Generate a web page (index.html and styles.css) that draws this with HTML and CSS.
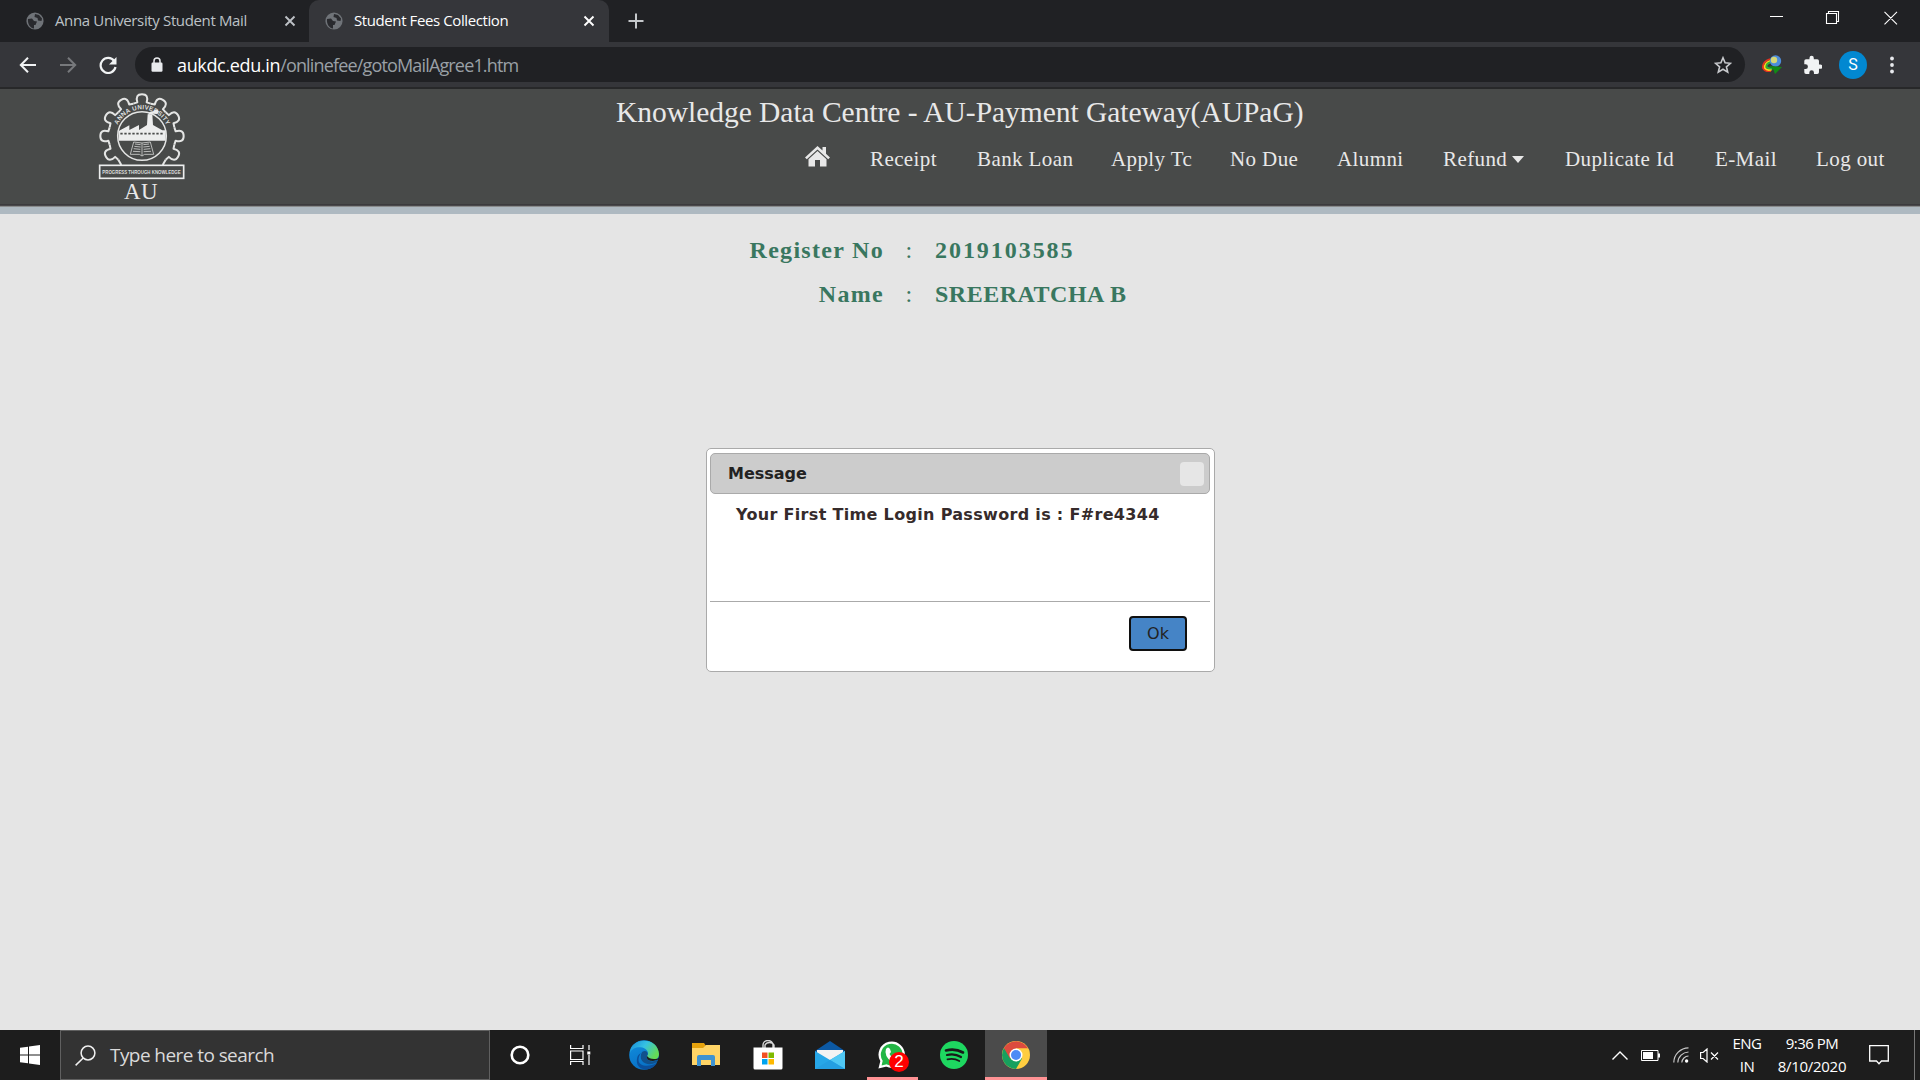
FILE: index.html
```html
<!DOCTYPE html>
<html lang="en">
<head>
<meta charset="utf-8">
<title>Student Fees Collection</title>
<link rel="stylesheet" href="styles.css">
</head>
<body>
<svg class="defs" width="0" height="0">
  <symbol id="globe" viewBox="0 0 18 18"><circle cx="9" cy="9" r="8.6" fill="#6f7378"/><path d="M2 7 6 6.500 8 9 11 9.500 9.500 13 8 13 8 16.500C4 16 1.500 12 2 7ZM9 2 13 3 16 6.500 15.500 9 12 8.500 11.500 6 8.500 5Z" fill="#292a2e"/></symbol>
  <symbol id="cross" viewBox="0 0 12 12"><path d="M1.500 1.500 10.500 10.500M10.500 1.500 1.500 10.500" stroke="currentColor" stroke-width="1.900"/></symbol>
</svg>

<div class="tabs">
  <div class="tab"><svg class="fav"><use href="#globe"/></svg><span class="tab-title t1">Anna University Student Mail</span><svg class="x"><use href="#cross"/></svg></div>
  <div class="tab active"><svg class="fav"><use href="#globe"/></svg><span class="tab-title t2">Student Fees Collection</span><svg class="x"><use href="#cross"/></svg></div>
  <svg class="plus" width="16" height="16" viewBox="0 0 16 16"><path d="M8 .5v15M.5 8h15" stroke="#c5c8cb" stroke-width="2"/></svg>
  <svg class="winctl" width="128" height="14" viewBox="0 0 128 14" fill="none" stroke="#fff" stroke-width="1.100"><path d="M0 5.500h13M56.500 2.500h10v10h-10zM58.500 2.500v-2h10v10h-2M114.500.8 127 13.300M127 .8 114.500 13.300"/></svg>
</div>

<div class="toolbar">
  <div class="navbtns">
    <svg width="18" height="16" viewBox="0 0 18 16" fill="none" stroke="#f1f3f4" stroke-width="2"><path d="M17 8H2M9 .8 1.800 8 9 15.200"/></svg>
    <svg width="18" height="16" viewBox="0 0 18 16" fill="none" stroke="#77797c" stroke-width="2"><path d="M1 8h15M9 .8 16.200 8 9 15.200"/></svg>
    <svg width="18" height="18" viewBox="0 0 18 18"><path d="M15.200 5A7.500 7.500 0 1 0 16.500 11" fill="none" stroke="#f1f3f4" stroke-width="2.200"/><path d="M17.500 1v7.500H10z" fill="#f1f3f4"/></svg>
  </div>
  <div class="omnibox">
    <svg width="12" height="15" viewBox="0 0 12 15"><rect x=".5" y="5.500" width="11" height="9.200" rx="1.200" fill="#e8eaed"/><path d="M3 6V4a3 3 0 0 1 6 0v2" fill="none" stroke="#e8eaed" stroke-width="1.500"/></svg>
    <span class="url"><b>aukdc.edu.in</b>/onlinefee/gotoMailAgree1.htm</span>
    <svg class="star" width="18" height="18" viewBox="0 0 18 18"><path d="m9 1.800 2.100 5 5.400.5-4.100 3.500 1.300 5.300L9 13.300l-4.700 2.800 1.300-5.300L1.500 7.300l5.400-.5z" fill="none" stroke="#c8cacd" stroke-width="1.600"/></svg>
  </div>
  <div class="exts">
    <svg width="22" height="20" viewBox="0 0 22 20"><g fill="none" stroke-width="1.800"><path d="M9 4Q1 7 2 13q2 4 8 3" stroke="#e43120"/><path d="M10 5.500Q3 8 3.800 13q2 3 7 1.500" stroke="#ffd817"/><path d="M11 7Q5 8 5.500 12q2 2 6 1.500" stroke="#2ab23b"/></g><circle cx="14.500" cy="6" r="5.700" fill="#4c8ddc"/><circle cx="13" cy="5" r="3.200" fill="#d5d777"/><path d="M8 11 21 12 14 19 12.500 15Z" fill="#128a16"/></svg>
    <svg class="puzzle" width="19" height="19" viewBox="1 0 21 22"><path d="M20.500 11H19V7a2 2 0 0 0-2-2h-4V3.500a2.500 2.500 0 0 0-5 0V5H4a2 2 0 0 0-2 2v3.800h1.500a2.700 2.700 0 0 1 0 5.400H2V20a2 2 0 0 0 2 2h3.800v-1.500a2.700 2.700 0 0 1 5.400 0V22H17a2 2 0 0 0 2-2v-4h1.500a2.500 2.500 0 0 0 0-5z" fill="#f1f3f4"/></svg>
    <span class="avatar">S</span>
    <svg width="4" height="18" viewBox="0 0 4 18" fill="#e8eaed"><circle cx="2" cy="2.500" r="1.900"/><circle cx="2" cy="9" r="1.900"/><circle cx="2" cy="15.500" r="1.900"/></svg>
  </div>
</div>

<header class="site">
  <div class="brand">
    <svg class="crest" width="86" height="86" viewBox="57 28 258 258">
      <defs><path id="tooth" d="M-26-97L-14-101Q-21-125 0-125Q21-125 14-101L26-97"/><path id="arc" d="M106 157a80 80 0 0 1 160 0"/></defs>
      <g transform="translate(186 157)" fill="none" stroke="#e4e5e4" stroke-width="6" stroke-linejoin="round">
        <use href="#tooth" transform="rotate(-120)"/><use href="#tooth" transform="rotate(-90)"/><use href="#tooth" transform="rotate(-60)"/><use href="#tooth" transform="rotate(-30)"/><use href="#tooth"/><use href="#tooth" transform="rotate(30)"/><use href="#tooth" transform="rotate(60)"/><use href="#tooth" transform="rotate(90)"/><use href="#tooth" transform="rotate(120)"/>
        <path d="M-71 71-62 87M71 71 62 87"/><circle r="73" stroke-width="4.500"/>
      </g>
      <text class="arc-text"><textPath href="#arc" startOffset="34">ANNA UNIVERSITY</textPath></text>
      <path d="M116 171V142L148 125V139L177 124V139L201 124 203 92H217L219 124 247 140H257V171Z" fill="#eceded"/>
      <path d="M205 94Q206 82 220 83 230 72 237 84L232 91 219 90Z" fill="#eceded"/>
      <path d="M121 150H253" stroke="#4a4c4b" stroke-width="5" stroke-dasharray="7 5"/>
      <path d="M186 178 161 175 151 212 178 212 186 217 194 212 221 212 211 175ZM186 178V216M182 183 165 181M182 190 163 188M181 197 161 195M181 204 159 203M190 183 207 181M190 190 209 188M191 197 211 195M191 204 213 203" fill="none" stroke="#d0d1d0" stroke-width="2.500"/>
      <rect x="59" y="245" width="252" height="39" fill="#484a49" stroke="#eceded" stroke-width="5"/>
      <text class="motto" x="67" y="272" textLength="235" lengthAdjust="spacingAndGlyphs">PROGRESS THROUGH KNOWLEDGE</text>
    </svg>
    <span class="au">AU</span>
  </div>
  <div class="site-main">
    <h1>Knowledge Data Centre - AU-Payment Gateway(AUPaG)</h1>
    <nav>
      <svg class="home" width="25" height="21" viewBox="0 0 25 21" fill="#e8e8e8"><path d="M12.500 0 0 11.500 1.800 13.300 12.500 3.500 23.200 13.300 25 11.500 21 7.800V1H17.500V4.500Z"/><path d="M12.500 5 3.500 13.300V20.500H10V14H15V20.500H21.500V13.300Z"/></svg>
      <a class="w67">Receipt</a><a class="w94">Bank Loan</a><a class="w79">Apply Tc</a><a class="w67">No Due</a><a class="w66">Alumni</a><a class="refund">Refund<i class="caret"></i></a><a class="w110">Duplicate Id</a><a class="w61">E-Mail</a><a class="w67">Log out</a>
    </nav>
  </div>
</header>

<main>
  <div class="student">
    <span class="label">Register No</span><span class="colon">:</span><span class="digits">2019103585</span>
    <span class="label">Name</span><span class="colon">:</span><span class="name">SREERATCHA B</span>
  </div>
  <section class="dialog">
    <div class="dialog-title"><span>Message</span><button class="close" aria-label="Close"></button></div>
    <p>Your First Time Login Password is : F#re4344</p>
    <div class="dialog-foot"><button class="ok">Ok</button></div>
  </section>
</main>

<footer class="taskbar">
  <div class="start"><svg width="20" height="20" viewBox="0 0 20 20" fill="#fff"><path d="M0 2.800 8 1.700V9.500H0ZM9 1.500 20 0V9.500H9ZM0 10.500H8V18.300L0 17.200ZM9 10.500H20V20L9 18.500Z"/></svg></div>
  <div class="search"><svg width="21" height="21" viewBox="0 0 21 21" fill="none" stroke="#f0f0f0" stroke-width="1.500"><circle cx="13" cy="8" r="6.900"/><path d="M8.200 13 .6 20.400"/></svg><span>Type here to search</span></div>
  <div class="cell c60"><svg width="20" height="20" viewBox="0 0 20 20"><circle cx="10" cy="10" r="8.300" fill="none" stroke="#fff" stroke-width="2.600"/></svg></div>
  <div class="cell c63"><svg width="21" height="20" viewBox="0 0 21 20" fill="none" stroke="#fff" stroke-width="1.200"><path d="M.6 0V3.500H13V0M.6 6H13V14.500H.6ZM.6 20V16.500H13V20M19 0V5M19 10V20"/><path d="M17.300 6.500h3v3h-3z" fill="#fff" stroke="none"/></svg></div>
  <div class="cell"><svg width="30" height="30" viewBox="0 0 30 30"><defs><linearGradient id="ea" x2="1" y2=".5"><stop stop-color="#1789d8"/><stop offset=".5" stop-color="#35c1e4"/><stop offset="1" stop-color="#65db55"/></linearGradient><linearGradient id="eb" y2="1" x2=".4"><stop stop-color="#1290df"/><stop offset="1" stop-color="#0870c5"/></linearGradient></defs><circle cx="15" cy="15" r="14.800" fill="url(#eb)"/><path d="M1 13C1-3 29-4 30 14c0 8-12 8-12 3 0-2 1-2 1-4C18 6 4 5 1 13Z" fill="url(#ea)"/><path d="M12 13C4 25 17 29 28 23 22 33 6 31 8 19c0-3 2-5 4-6Z" fill="#0b4f9b"/><path d="M13 12c-4 8 2 13 10 12 5-1 7-4 5-4-5 3-11 1-10-4 2-2 0-7-5-4Z" fill="#11518d"/><path d="M18 16q-1 5 6 5l5.500-1.500-1.500 3 4-1v-5q-3 3-7 2.500-5 0-7-3Z" fill="#1d1d1d"/></svg></div>
  <div class="cell"><svg width="28" height="24" viewBox="0 0 28 24"><path d="M0 0H12L14 3H28V22H0Z" fill="#e6a20c"/><path d="M0 5H11L14 2H28V22H0Z" fill="#ffd466"/><path d="M5 23V14Q5 12 7 12H21Q23 12 23 14V23H19V17H9V23Z" fill="#3f93d1"/></svg></div>
  <div class="cell"><svg width="30" height="30" viewBox="0 0 30 30"><path d="M10 8V5a5 4.500 0 0 1 10 0V8M12 8V5a5 4.500 0 0 1 9 0V8" fill="none" stroke="#d8d8d8" stroke-width="1.400"/><path d="M.5 7.500h29V28q0 1.500-1.500 1.500H2Q.5 29.500.5 28Z" fill="#fff"/><path d="M9 12.500h5.500V18H9z" fill="#f25022"/><path d="M15.500 12.500H21V18h-5.500z" fill="#7fba00"/><path d="M9 19h5.500v5.500H9z" fill="#00a4ef"/><path d="M15.500 19H21v5.500h-5.500z" fill="#ffb900"/></svg></div>
  <div class="cell"><svg width="30" height="28" viewBox="0 0 30 28"><path d="M0 10 15 0 30 10V18H0Z" fill="#0c59a4"/><path d="M2 9H28V21H2Z" fill="#f3f3f3"/><path d="M0 10 15 19 30 10V28H0Z" fill="#27a7e8"/><path d="M15 19 30 10V28Z" fill="#50c8f4"/><path d="M15 19 30 28H0Z" fill="#249fe2"/></svg></div>
  <div class="cell whats"><svg width="28" height="28" viewBox="0 0 28 28"><path d="M2 26 3.500 20A12 12 0 1 1 8.500 24.500Z" fill="#23b645" stroke="#fff" stroke-width="2.300"/><path d="M8 8q2-3 4 0l1 3-1.500 2q2 4 5 5l2-2 3 2q0 4-4 4Q8 19 7.500 11Z" fill="#fff"/></svg><span class="badge">2</span></div>
  <div class="cell"><svg width="28" height="28" viewBox="0 0 28 28"><circle cx="14" cy="14" r="14" fill="#1ed760"/><g fill="none" stroke="#191919" stroke-linecap="round"><path d="M6 9.500q9-2.500 17 2" stroke-width="2.600"/><path d="M7 14q7.500-2 14 2" stroke-width="2.200"/><path d="M7.500 18.300q6.500-1.500 11.800 1.700" stroke-width="1.800"/></g></svg></div>
  <div class="cell chrome"><svg width="28" height="28" viewBox="0 0 28 28"><circle cx="14" cy="14" r="14" fill="#ffcd40"/><path d="M14 14 1.900 7A14 14 0 0 0 14 28L20 17.500Z" fill="#17a05e"/><path d="M14 14 8 17.500 1.900 7A14 14 0 0 1 26.100 7.300H14Z" fill="#dc4b3e"/><circle cx="14" cy="14" r="6.500" fill="#fff"/><circle cx="14" cy="14" r="5" fill="#4c8bf5"/></svg></div>
  <div class="tray">
    <svg class="chev" width="16" height="9" viewBox="0 0 16 9" fill="none" stroke="#fff" stroke-width="1.400"><path d="M.5 8.500 8 1 15.500 8.500"/></svg>
    <svg class="batt" width="19" height="11" viewBox="0 0 19 11"><path d="M.5.5h16.500v10H.5z" fill="none" stroke="#fff"/><path d="M2 2h10v7H2zM17 3.500h2v4h-2z" fill="#fff"/></svg>
    <svg class="wifi" width="16" height="16" viewBox="0 0 16 16" fill="none" stroke="#c9c9c9" stroke-width="1.200"><path d="M.8 15.500A15 15 0 0 1 15.500.8M4.800 15.500A11 11 0 0 1 15.500 5M8.800 15.500A7 7 0 0 1 15.500 9"/><circle cx="13.600" cy="14" r="1.700" fill="#fff" stroke="none"/></svg>
    <svg class="vol" width="19" height="15" viewBox="0 0 19 15" fill="none" stroke="#fff" stroke-width="1.200"><path d="M.6 4.500h2.500L7 1V14L3.100 10.500H.6ZM11 4.500 18 11.500M18 4.500 11 11.500"/></svg>
    <div class="lang"><span>ENG</span><span>IN</span></div>
    <div class="clock"><span>9:36 PM</span><span class="date">8/10/2020</span></div>
    <svg class="note" width="20" height="20" viewBox="0 0 20 20" fill="none" stroke="#fff" stroke-width="1.300"><path d="M.7.700h18.600V16H12.500L10 18.700 7.500 16H.7Z"/></svg>
    <div class="desk"></div>
  </div>
</footer>
</body>
</html>
```
FILE: styles.css
```css
* { box-sizing: border-box; }
body { margin: 0; width: 1920px; height: 1080px; display: flex; flex-direction: column; overflow: hidden; background: #e5e5e5; font-family: "Open Sans", "Noto Sans", sans-serif; }
svg { flex: none; display: block; }
.defs { position: absolute; }

.tabs { height: 42px; flex: none; display: flex; align-items: center; background: #202124; }
.tab { width: 309px; height: 42px; padding-left: 26px; display: flex; align-items: center; color: #bdc1c6; font-size: 15px; }
.tab.active { width: 300px; padding-left: 16px; background: #35363a; color: #fff; border-radius: 10px 10px 0 0; }
.fav { width: 18px; height: 18px; }
.tab-title { margin: 0 0 2px 11px; flex: 1; white-space: nowrap; line-height: 20px; }
.t1 { letter-spacing: -.36px; }
.t2 { letter-spacing: -.4px; }
.x { width: 12px; height: 12px; margin-right: 13px; }
.active .x { margin-right: 14px; }
.plus { margin-left: 19px; }
.winctl { margin: 0 22px 6px auto; }

.toolbar { height: 47px; flex: none; display: flex; align-items: center; background: #35363a; border-bottom: 2px solid #272829; padding: 1px 26px 1px 19px; }
.navbtns { display: flex; align-items: center; width: 116px; gap: 22px; }
.omnibox { width: 1610px; height: 35px; border-radius: 18px; background: #202124; display: flex; align-items: center; padding: 0 13px 0 16px; }
.url { margin-left: 14px; font-size: 18px; letter-spacing: -.84px; color: #9aa0a6; line-height: 24px; }
.url b { font-weight: 400; color: #fff; letter-spacing: -.35px; }
.star { margin-left: auto; }
.exts { flex: 1; display: flex; align-items: center; margin-left: 16px; }
.puzzle { margin-left: 20px; }
.avatar { width: 28px; height: 28px; border-radius: 50%; margin: 0 23px 0 17px; background: #0288d1; color: #fff; font: 16px/28px Roboto, sans-serif; text-align: center; }

.site { height: 125px; flex: none; display: flex; background: #484a49; color: #e8e8e8; font-family: "Liberation Serif", serif; border-bottom: 7px solid #aeb9c1; box-shadow: inset 0 -1px #8a8c8c, inset 0 -2px #4a494b, inset 0 -3px #3c3b3d; }
.brand { width: 284px; padding: 4px 0 0 99px; }
.crest { overflow: visible; }
.au { display: block; width: 84px; font-size: 23px; line-height: 25px; text-align: center; letter-spacing: .5px; }
.arc-text { font: 700 19px "Liberation Sans", sans-serif; fill: #dedfde; letter-spacing: .7px; }
.motto { font: 700 18px "Liberation Sans", sans-serif; fill: #dedfde; }
.site-main { flex: 1; display: flex; flex-direction: column; }
h1 { margin: 7px 0 0 332px; font-weight: 400; font-size: 29.500px; line-height: 32px; letter-spacing: -.03px; white-space: nowrap; }
nav { display: flex; justify-content: flex-end; gap: 40px; margin: 19px 37px 0 0; font-size: 21px; line-height: 24px; letter-spacing: .4px; white-space: nowrap; }
.home { margin-top: -1px; }
.w67 { width: 67px; } .w94 { width: 94px; } .w79 { width: 79px; } .w66 { width: 66px; } .w110 { width: 110px; } .w61 { width: 61px; }
.refund { width: 82px; display: flex; align-items: center; gap: 5px; }
.caret { border: 6.500px solid transparent; border-top: 7px solid #e8e8e8; border-bottom: 0; }

main { flex: 1; display: flex; flex-direction: column; }
.student { display: grid; grid-template-columns: 884px 51px auto; grid-auto-rows: 44px; align-items: center; margin-top: 14px; color: #39775f; font: 700 24px/28px "Liberation Serif", serif; letter-spacing: 1.300px; }
.label { text-align: right; }
.colon { text-align: center; font-weight: 400; }
.digits { letter-spacing: 1.950px; }
.name { letter-spacing: .5px; }
.dialog { width: 509px; height: 224px; margin: 132px 0 0 706px; padding: 4px 4px 4px 3px; border: 1px solid #aaa; border-radius: 5px; background: #fff; display: flex; flex-direction: column; font: 16px/20px "DejaVu Sans", sans-serif; color: #222; }
.dialog-title { height: 41px; flex: none; display: flex; align-items: center; justify-content: space-between; padding: 1px 5px 0 17px; border: 1px solid #aaa; border-radius: 5px; background: #ccc; font-weight: 700; }
.close { width: 24px; height: 24px; margin-bottom: 1px; border: 0; border-radius: 4px; background: #e6e6e6; }
.dialog p { margin: 11px 0 0 26px; font-weight: 700; color: #362b2b; letter-spacing: .32px; white-space: nowrap; }
.dialog-foot { margin-top: auto; height: 66px; border-top: 1px solid #aaa; padding: 14px 23px 0 0; display: flex; justify-content: flex-end; }
.ok { width: 58px; height: 35px; padding: 0; border: 2px solid #101010; border-radius: 4px; background: #4584c6; color: #222; font: inherit; }

.taskbar { height: 50px; flex: none; display: flex; background: #1d1d1d; color: #fff; }
.start { width: 60px; display: flex; align-items: center; justify-content: center; }
.search { width: 430px; background: #333; border: 1px solid #606060; display: flex; align-items: center; padding-left: 14px; gap: 14px; font-size: 19px; color: #dadada; }
.search span { letter-spacing: -.57px; }
.cell { width: 62px; display: flex; align-items: center; justify-content: center; }
.c60 { width: 60px; }
.c63 { width: 63px; padding-right: 3px; }
.whats { position: relative; }
.whats::after { content: ""; position: absolute; left: 6px; bottom: 0; width: 51px; height: 3px; background: #ff9294; }
.badge { position: absolute; left: 28px; top: 22px; width: 20px; height: 20px; border-radius: 50%; background: #f00; font: 17px/20px "Liberation Sans", sans-serif; text-align: center; }
.chrome { background: #4b4b4b; border-bottom: 3px solid #ff9294; padding-top: 2px; }
.tray { flex: 1; display: flex; align-items: center; justify-content: flex-end; font-size: 15px; line-height: 23px; letter-spacing: -.5px; }
.batt { margin-left: 13px; }
.wifi { margin-left: 13px; }
.vol { margin-left: 11px; }
.lang, .clock { display: flex; flex-direction: column; align-items: center; white-space: nowrap; }
.lang { width: 44px; margin-left: 6px; }
.clock { width: 72px; margin-left: 7px; }
.date { letter-spacing: -.3px; }
.note { margin-left: 21px; }
.desk { width: 6px; height: 50px; margin-left: 25px; border-left: 1px solid #777; }
```
